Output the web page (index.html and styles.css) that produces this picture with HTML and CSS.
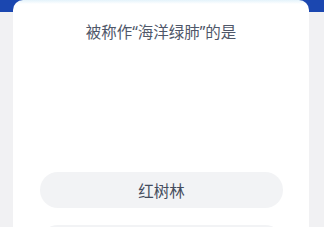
FILE: index.html
```html
<!DOCTYPE html>
<html lang="zh-CN">
<head>
  <meta charset="UTF-8">
  <meta name="viewport" content="width=device-width, initial-scale=1.0">
  <title>答题</title>
  <link rel="stylesheet" href="styles.css">
</head>
<body>

  <div class="top-band"></div>

  <div class="card">
    <h2 class="question">被称作<span class="quote">“</span>海洋绿肺<span class="quote">”</span>的是</h2>

    <div class="options">
      <button class="option">红树林</button>
      <button class="option"></button>
    </div>
  </div>

</body>
</html>
```

FILE: styles.css
```css
body {
  margin: 0;
  height: 227px;
  overflow: hidden;
  font-family: "Noto Sans CJK SC", "Noto Sans", sans-serif;
  background-color: #f1f1f3;
}

.top-band {
  height: 12px;
  background-color: #1b47b0;
}

.card {
  margin: -12px 15px 0 13px;
  padding: 21px 0 0;
  height: 300px;
  background: linear-gradient(#e4f3fb, #fff 4px);
  border-radius: 10px 10px 0 0;
}

.question {
  margin: 0;
  font-size: 15.5px;
  line-height: 20px;
  font-weight: 400;
  color: #4f5769;
  text-align: center;
}

.quote {
  font-family: "Noto Sans", sans-serif;
}

.options {
  display: flex;
  flex-direction: column;
  gap: 17px;
  margin: 130px 26px 0 27px;
}

.option {
  height: 36px;
  border: none;
  border-radius: 18px;
  background-color: #f2f3f5;
  font-family: inherit;
  font-size: 15.5px;
  color: #454d5e;
  cursor: pointer;
}
```
